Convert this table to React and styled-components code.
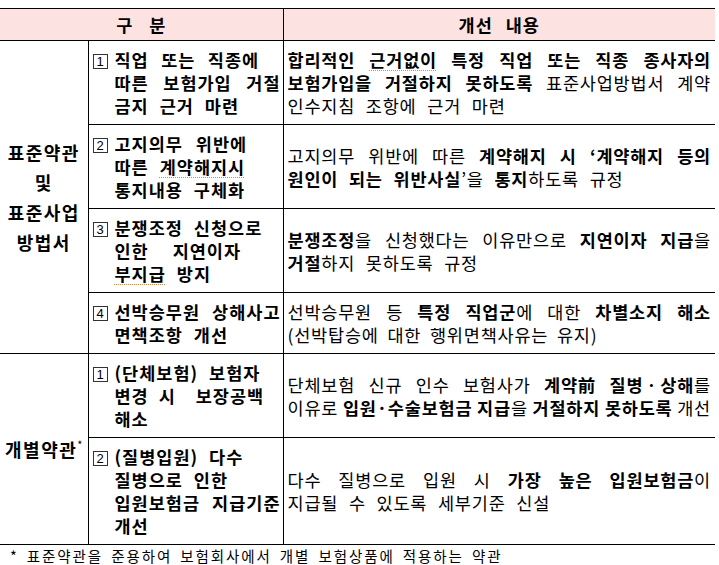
import React from "react";
import styled, { createGlobalStyle } from "styled-components";

const GlobalStyle = createGlobalStyle`
  body {
    margin: 0;
    background: #fff;
    color: #000;
    font-family: "Noto Sans CJK KR", "Noto Sans", sans-serif;
  }
`;

const Page = styled.div`
  width: 715px;
  padding-top: 8px;
`;

const Table = styled.table`
  width: 715px;
  border-collapse: collapse;
  table-layout: fixed;
`;

const HeadCell = styled.th`
  height: 31px;
  padding: 0;
  background: #fde2e2;
  border-top: 1px solid #000;
  border-bottom: 1px solid #000;
  border-left: ${(p) => (p.$divider ? "1px solid #000" : "none")};
  font-size: 17.5px;
  font-weight: 700;
  line-height: 23px;
  letter-spacing: 1px;
  text-align: center;
  word-spacing: ${(p) => p.$gap || "0"};
`;

const CategoryCell = styled.td`
  padding: 0;
  border-bottom: 1px solid #000;
  vertical-align: middle;
  text-align: center;
  font-size: 18px;
  font-weight: 700;
  letter-spacing: 1.5px;
  line-height: 30px;
`;

const Sup = styled.sup`
  font-size: 11px;
  font-weight: 400;
  letter-spacing: 0;
  vertical-align: 8px;
  line-height: 0;
`;

const ItemCell = styled.td`
  padding: 7px 2px 7px 4px;
  border-top: 1px solid #000;
  border-bottom: 1px solid #000;
  border-left: 1px solid #000;
  vertical-align: middle;
  font-size: 17.5px;
  font-weight: 700;
  line-height: 23px;
  letter-spacing: 1px;
`;

const DetailCell = styled.td`
  padding: 7px 4px;
  border-top: 1px solid #000;
  border-bottom: 1px solid #000;
  border-left: 1px solid #000;
  vertical-align: middle;
  font-size: 17.5px;
  font-weight: 400;
  line-height: 23px;
  letter-spacing: 0.8px;
`;

const Item = styled.div`
  display: flex;
  align-items: flex-start;
`;

const NumBox = styled.span`
  flex: none;
  display: flex;
  align-items: center;
  justify-content: center;
  box-sizing: border-box;
  width: 15px;
  height: 15px;
  margin: 6px 7px 0 0;
  border: 1px solid #333;
  font-family: "Liberation Sans", Arial, sans-serif;
  font-size: 13px;
  font-weight: 400;
  line-height: 1;
  letter-spacing: 0;
`;

const Lines = styled.div`
  flex: 1;
  min-width: 0;
`;

const Line = styled.div`
  height: 23px;
  word-break: keep-all;
  text-align: ${(p) => (p.$full ? "justify" : "left")};
  text-align-last: ${(p) => (p.$full ? "justify" : "left")};
  word-spacing: ${(p) => (p.$full ? "-1px" : p.$ws || "6px")};
  white-space: ${(p) => (p.$full ? "normal" : "nowrap")};
`;

const B = styled.b`
  font-weight: 700;
`;

const Han = styled.span`
  display: inline-block;
`;

const Squiggle = styled.span`
  text-decoration: underline dotted #e8862a;
  text-decoration-thickness: 1px;
  text-underline-offset: 3px;
`;

const Footnote = styled.p`
  margin: 0;
  padding: 0 0 0 10px;
  font-size: 14.5px;
  line-height: 22px;
  letter-spacing: 1.9px;
  word-spacing: 3px;
`;

const groups = [
  {
    title: (
      <>
        표준약관
        <br />및<br />
        표준사업
        <br />
        방법서
      </>
    ),
    items: [
      {
        no: "1",
        head: [
          { ws: "7.5px", text: "직업 또는 직종에" },
          { full: true, text: "따른 보험가입 거절" },
          { text: "금지 근거 마련" },
        ],
        body: [
          {
            full: true,
            text: (
              <B>
                합리적인 <Squiggle>근거없이</Squiggle> 특정 직업 또는 직종 종사자의
              </B>
            ),
          },
          {
            full: true,
            text: (
              <>
                <B>보험가입을 거절하지 못하도록</B> 표준사업방법서 계약
              </>
            ),
          },
          { text: "인수지침 조항에 근거 마련" },
        ],
      },
      {
        no: "2",
        head: [
          { ws: "8px", text: "고지의무 위반에" },
          {
            text: (
              <>
                따른 <Squiggle>계약해지시</Squiggle>
              </>
            ),
          },
          { text: "통지내용 구체화" },
        ],
        body: [
          {
            full: true,
            text: (
              <>
                고지의무 위반에 따른 <B>계약해지 시 ‘계약해지 등의</B>
              </>
            ),
          },
          {
            text: (
              <>
                <B>원인이 되는 위반사실</B>’을 <B>통지</B>하도록 규정
              </>
            ),
          },
        ],
      },
      {
        no: "3",
        head: [
          { text: "분쟁조정 신청으로" },
          { ws: "7px", text: "인한\u00a0 지연이자" },
          {
            text: (
              <>
                <Squiggle>부지급</Squiggle> 방지
              </>
            ),
          },
        ],
        body: [
          {
            full: true,
            text: (
              <>
                <B>분쟁조정</B>을 신청했다는 이유만으로 <B>지연이자 지급</B>을
              </>
            ),
          },
          {
            text: (
              <>
                <B>거절</B>하지 못하도록 규정
              </>
            ),
          },
        ],
      },
      {
        no: "4",
        head: [
          { full: true, text: "선박승무원 상해사고" },
          { text: "면책조항 개선" },
        ],
        body: [
          {
            full: true,
            text: (
              <>
                선박승무원 등 <B>특정 직업군</B>에 대한 <B>차별소지 해소</B>
              </>
            ),
          },
          { ws: "4px", text: "(선박탑승에 대한 행위면책사유는 유지)" },
        ],
      },
    ],
  },
  {
    title: (
      <>
        개별약관<Sup>*</Sup>
      </>
    ),
    items: [
      {
        no: "1",
        head: [
          { text: "(단체보험) 보험자" },
          { ws: "5px", text: "변경 시\u00a0 보장공백" },
          { text: "해소" },
        ],
        body: [
          {
            full: true,
            text: (
              <>
                단체보험 신규 인수 보험사가{" "}
                <B>
                  <Han>계약前</Han> 질병ㆍ상해
                </B>
                를
              </>
            ),
          },
          {
            full: true,
            text: (
              <>
                이유로 <B>입원·수술보험금 지급</B>을 <B>거절하지 못하도록</B> 개선
              </>
            ),
          },
        ],
      },
      {
        no: "2",
        head: [
          { text: "(질병입원) 다수" },
          { text: "질병으로 인한" },
          { full: true, text: "입원보험금 지급기준" },
          { text: "개선" },
        ],
        body: [
          {
            full: true,
            text: (
              <>
                다수 질병으로 입원 시 <B>가장 높은 입원보험금</B>이
              </>
            ),
          },
          { text: "지급될 수 있도록 세부기준 신설" },
        ],
      },
    ],
  },
];

const renderLines = (lines) =>
  lines.map((l, i) => (
    <Line key={i} $full={l.full} $ws={l.ws}>
      {l.text}
    </Line>
  ));

export default function App() {
  return (
    <Page>
      <GlobalStyle />
      <Table>
        <colgroup>
          <col style={{ width: 88 }} />
          <col style={{ width: 195 }} />
          <col style={{ width: 432 }} />
        </colgroup>
        <thead>
          <tr>
            <HeadCell colSpan={2} $gap="11px">
              구 분
            </HeadCell>
            <HeadCell $divider $gap="8px">
              개선 내용
            </HeadCell>
          </tr>
        </thead>
        <tbody>
          {groups.map((g, gi) =>
            g.items.map((it, i) => (
              <tr key={`${gi}-${i}`}>
                {i === 0 && (
                  <CategoryCell rowSpan={g.items.length}>{g.title}</CategoryCell>
                )}
                <ItemCell>
                  <Item>
                    <NumBox>{it.no}</NumBox>
                    <Lines>{renderLines(it.head)}</Lines>
                  </Item>
                </ItemCell>
                <DetailCell>{renderLines(it.body)}</DetailCell>
              </tr>
            ))
          )}
        </tbody>
      </Table>
      <Footnote>* 표준약관을 준용하여 보험회사에서 개별 보험상품에 적용하는 약관</Footnote>
    </Page>
  );
}
